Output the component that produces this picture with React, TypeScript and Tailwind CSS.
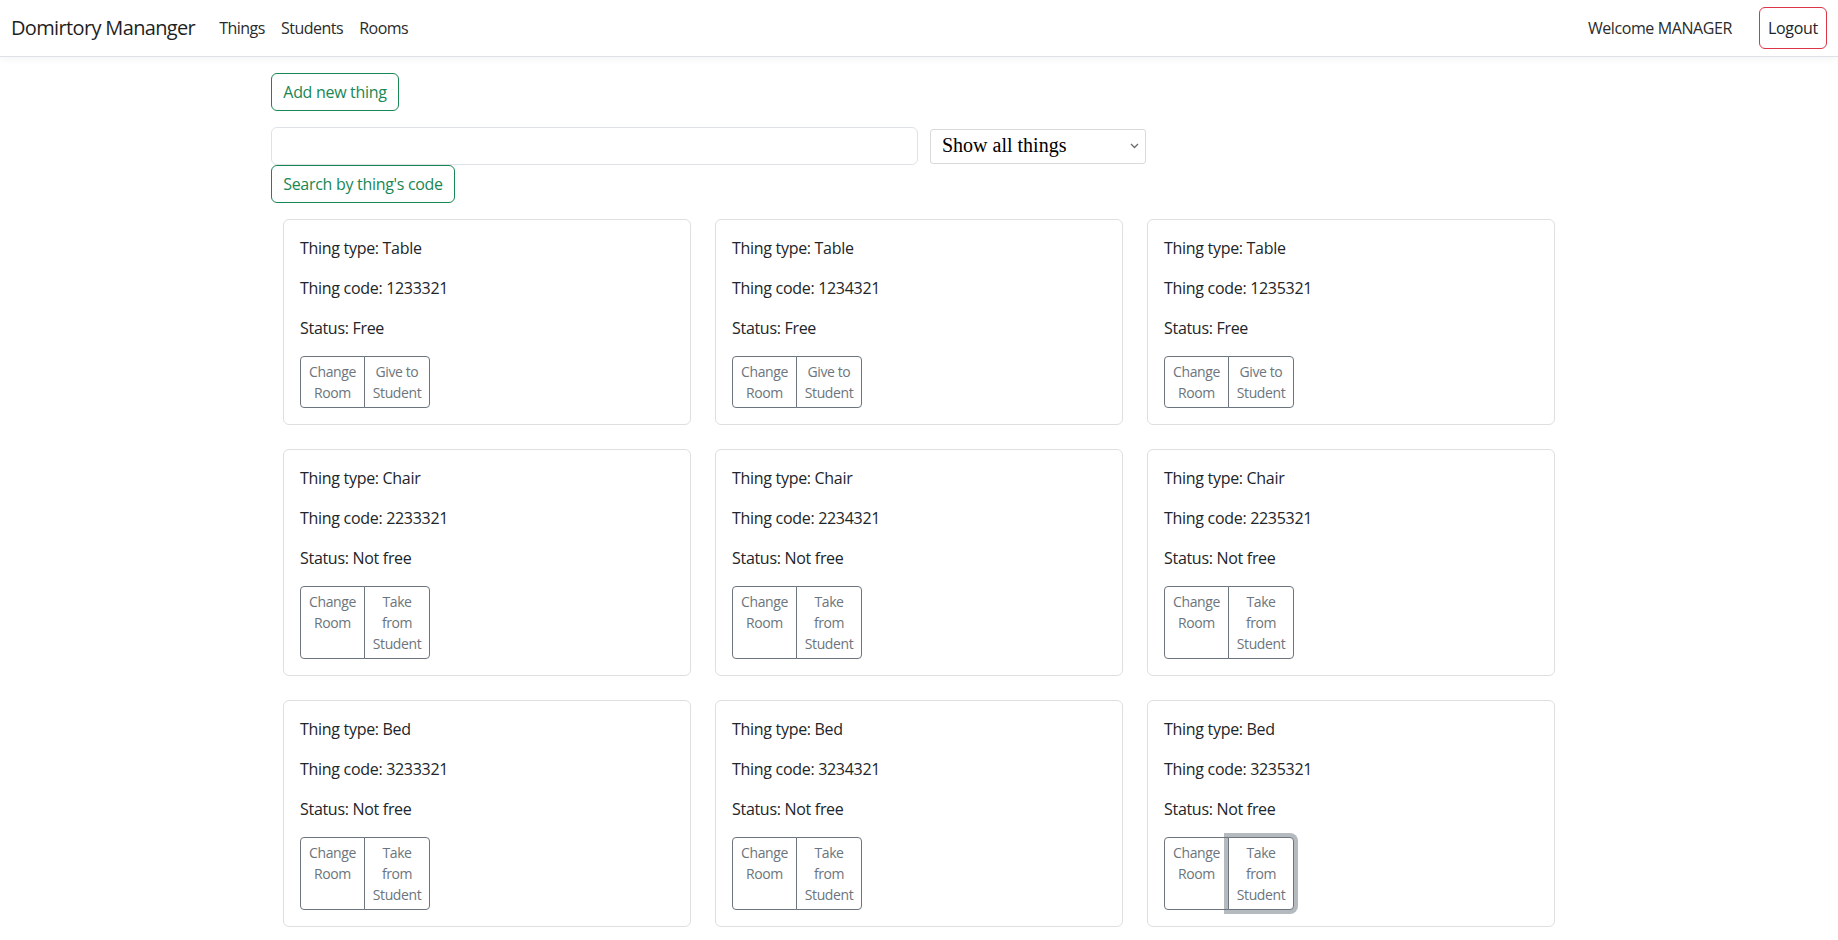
import React from "react";

type Thing = { type: string; code: string; free: boolean };

const things: Thing[] = [
  { type: "Table", code: "1233321", free: true },
  { type: "Table", code: "1234321", free: true },
  { type: "Table", code: "1235321", free: true },
  { type: "Chair", code: "2233321", free: false },
  { type: "Chair", code: "2234321", free: false },
  { type: "Chair", code: "2235321", free: false },
  { type: "Bed", code: "3233321", free: false },
  { type: "Bed", code: "3234321", free: false },
  { type: "Bed", code: "3235321", free: false },
];

function Card({ t, focused }: { t: Thing; focused: boolean }) {
  return (
    <div className="mx-3 rounded-[6px] border border-[#dfdfdf] bg-white p-4">
      <p className="mb-4 leading-6">Thing type: {t.type}</p>
      <p className="mb-4 leading-6">Thing code: {t.code}</p>
      <p className="mb-4 leading-6">Status: {t.free ? "Free" : "Not free"}</p>
      <div className="flex items-stretch">
        <button className="flex w-[65px] flex-col items-center justify-start rounded-l-[4px] border border-[#6c757d] bg-white px-2 py-1 text-center text-[14px] leading-[21px] tracking-[-0.4px] text-[#6c757d]">
          <span>Change</span>
          <span>Room</span>
        </button>
        <button
          className={
            focused
              ? "relative z-10 -ml-px flex w-[66px] flex-col items-center justify-start rounded-r-[4px] border border-[#6c757d] bg-white px-2 py-1 text-center text-[14px] leading-[21px] tracking-[-0.4px] text-[#6c757d] shadow-[0_0_0_4px_rgba(108,117,125,0.5)]"
              : "-ml-px flex w-[66px] flex-col items-center justify-start rounded-r-[4px] border border-[#6c757d] bg-white px-2 py-1 text-center text-[14px] leading-[21px] tracking-[-0.4px] text-[#6c757d]"
          }
        >
          {t.free ? (
            <>
              <span>Give to</span>
              <span>Student</span>
            </>
          ) : (
            <>
              <span>Take</span>
              <span>from</span>
              <span>Student</span>
            </>
          )}
        </button>
      </div>
    </div>
  );
}

export default function App() {
  return (
    <div className="min-h-screen bg-white font-['Open_Sans',sans-serif] text-[16px] tracking-[-0.3px] text-[#212529]">
      <nav className="relative flex h-[57px] items-center border-b border-[#dee2e6] bg-white pl-[11px] pr-[11px] shadow-[0_3px_8px_rgba(0,0,0,0.04)]">
        <span className="mr-4 text-[20px] leading-[30px] tracking-[-0.65px] text-[#1f1f1f]">Domirtory Mananger</span>
        <div className="flex items-center">
          <a className="px-2 text-[16px] leading-6 tracking-[-0.5px] text-[#2b2b2b]">Things</a>
          <a className="px-2 text-[16px] leading-6 tracking-[-0.5px] text-[#2b2b2b]">Students</a>
          <a className="px-2 text-[16px] leading-6 tracking-[-0.5px] text-[#2b2b2b]">Rooms</a>
        </div>
        <div className="ml-auto flex items-center">
          <span className="mr-[27px] leading-6 tracking-[-0.4px] text-[#2b2b2b]">Welcome MANAGER</span>
          <button className="h-[42px] w-[68px] rounded-[6px] border border-[#dc3545] leading-6 text-[#212529]">
            Logout
          </button>
        </div>
      </nav>

      <div className="mx-auto w-[1296px]">
        <button className="mt-4 h-[38px] w-[128px] rounded-[6px] border border-[#198754] leading-6 text-[#198754]">
          Add new thing
        </button>
        <div className="mt-4 flex items-center">
          <input className="h-[38px] w-[647px] rounded-[6px] border border-[#dee2e6] bg-white px-3 outline-none" />
          <div className="relative ml-3">
            <select className="h-[35px] w-[216px] appearance-none rounded-[3px] border border-[#d9d9d9] bg-white pb-[2px] pl-[11px] font-['Liberation_Serif',serif] text-[20px] tracking-normal text-black outline-none">
              <option>Show all things</option>
            </select>
            <svg
              className="pointer-events-none absolute right-[7px] top-[14px]"
              width="9"
              height="6"
              viewBox="0 0 9 6"
              fill="none"
            >
              <path d="M1 1l3.5 3.5L8 1" stroke="#6b6b6b" strokeWidth="1.3" />
            </svg>
          </div>
        </div>
        <button className="h-[38px] w-[184px] rounded-[6px] border border-[#198754] leading-6 text-[#198754]">
          Search by thing's code
        </button>

        <div className="mt-4 grid grid-cols-3 gap-y-6">
          {things.map((t, i) => (
            <Card key={t.code} t={t} focused={i === things.length - 1} />
          ))}
        </div>
      </div>
    </div>
  );
}
